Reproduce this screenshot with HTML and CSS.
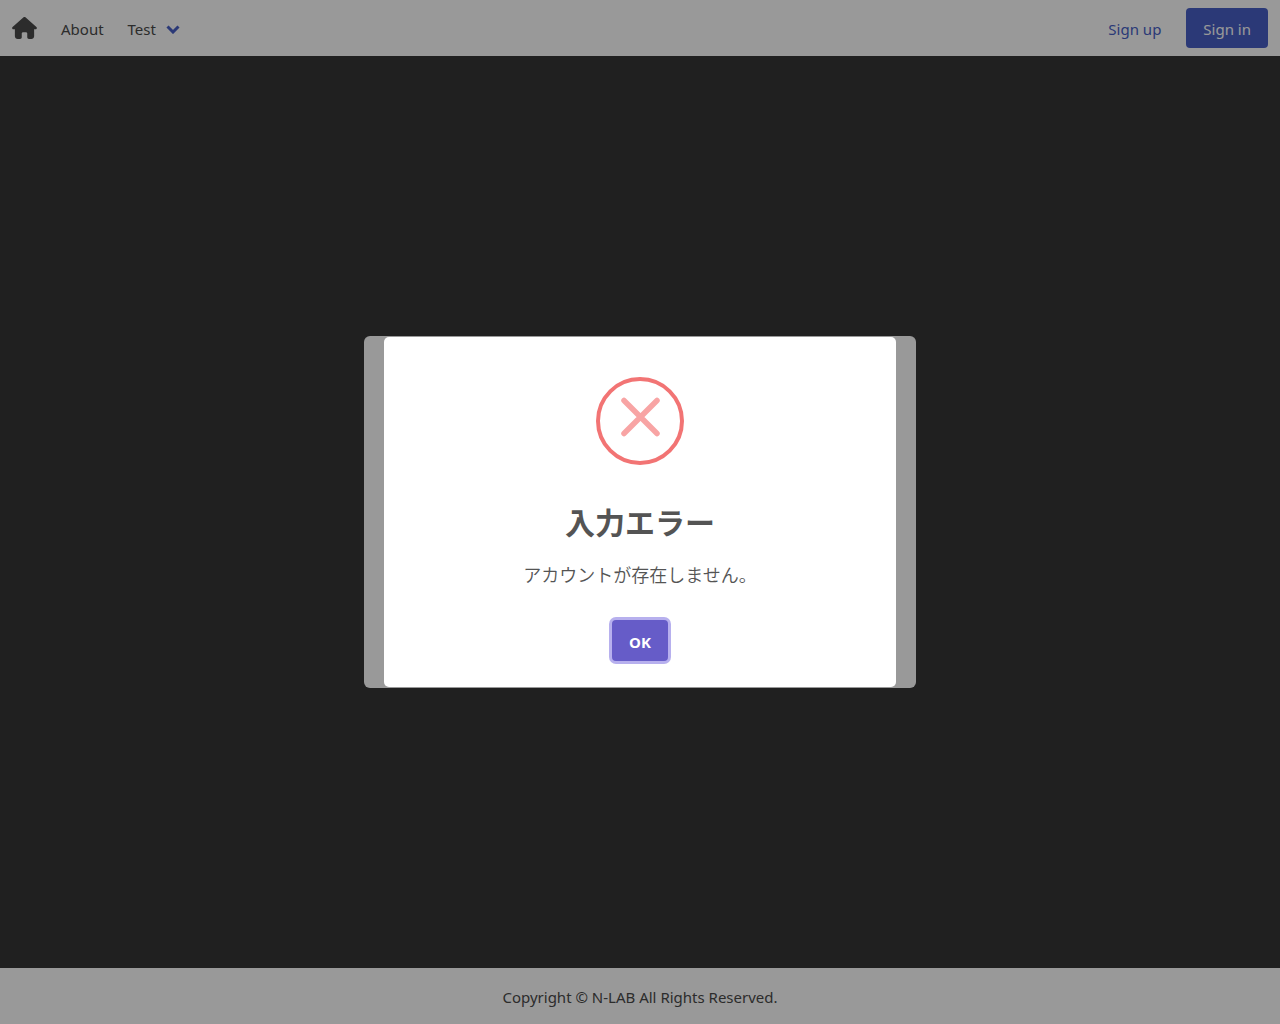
FILE: index.html
```html
<!DOCTYPE html>
<html lang="ja">
<head>
<meta charset="utf-8">
<meta name="viewport" content="width=device-width, initial-scale=1">
<title>N-LAB</title>
<link rel="stylesheet" href="styles.css">
</head>
<body>
<header>
  <nav class="navbar" aria-label="Main">
    <a class="nav-item home" href="#" aria-label="Home">
      <svg width="25" height="22" viewBox="0 0 576 512" aria-hidden="true"><path fill="currentColor" d="M575.800 255.500c0 18-15 32.100-32 32.100h-32l.7 160.200c0 35-29 64.200-64.500 64.200H392c-22 0-40-18-40-40v-88c0-17.700-14.300-32-32-32h-64c-17.700 0-32 14.300-32 32v88c0 22-18 40-40 40h-56c-35 0-64-29-64-64V287.600H32c-18 0-32-14-32-32.100 0-9 3-17 10-24L266.400 8c7-7 15-8 22-8s15 2 21 7l255.400 224.500c8 7 12 15 11 24z"/></svg>
    </a>
    <a class="nav-item" href="#">About</a>
    <a class="nav-item dropdown" href="#">Test
      <svg width="14" height="9" viewBox="0 0 14 9" aria-hidden="true"><path d="M1.500 1.500L7 7l5.500-5.500" fill="none" stroke="#485fc7" stroke-width="3"/></svg>
    </a>
    <div class="account">
      <a class="sign-up" href="#">Sign up</a>
      <a class="sign-in" href="#">Sign in</a>
    </div>
  </nav>
</header>
<main class="stage">
  <div class="form-box"></div>
</main>
<footer class="footer">Copyright © N-LAB All Rights Reserved.</footer>
<div class="overlay">
  <div class="dialog" role="alertdialog" aria-modal="true" aria-labelledby="title" aria-describedby="message">
    <svg class="error-icon" width="88" height="88" viewBox="0 0 88 88" aria-hidden="true">
      <circle cx="44" cy="44" r="42" fill="none" stroke="#f27474" stroke-width="4"/>
      <path d="M28 23.500l33 33M61 23.500l-33 33" fill="none" stroke="#f8a4a4" stroke-width="5.500" stroke-linecap="round"/>
    </svg>
    <h2 class="title" id="title">入力エラー</h2>
    <p class="message" id="message">アカウントが存在しません。</p>
    <button class="confirm" type="button">OK</button>
  </div>
</div>
</body>
</html>
```
FILE: styles.css
```css
* {
  box-sizing: border-box;
}

body {
  margin: 0;
  min-height: 100vh;
  display: flex;
  flex-direction: column;
  background: #363636;
  color: #4a4a4a;
  font: 15px/24px "Noto Sans", "Noto Sans CJK JP", sans-serif;
}

a {
  color: inherit;
  text-decoration: none;
}

.navbar {
  display: flex;
  min-height: 56px;
  padding-right: 12px;
  background: #fff;
}

.nav-item {
  display: flex;
  align-items: center;
  padding: 2px 12px 0;
}

.home {
  padding-top: 0;
}

.dropdown {
  gap: 10px;
}

.account {
  display: flex;
  align-items: center;
  gap: 8px;
  margin-left: auto;
}

.sign-up,
.sign-in {
  height: 40px;
  padding: 9px 17px 7px;
  border-radius: 4px;
  color: #485fc7;
}

.sign-in {
  background: #485fc7;
  color: #fff;
}

.stage {
  flex: 1;
  display: grid;
  place-items: center;
  padding: 20px;
}

.form-box {
  width: 100%;
  max-width: 552px;
  height: 352px;
  border-radius: 6px;
  background: #fff;
}

.footer {
  padding: 17px 12px 15px;
  background: #fff;
  text-align: center;
}

.overlay {
  position: fixed;
  inset: 0;
  display: grid;
  place-items: center;
  padding: 10px;
  background: rgba(0, 0, 0, 0.4);
}

.dialog {
  display: flex;
  flex-direction: column;
  align-items: center;
  width: 100%;
  max-width: 512px;
  padding: 40px 20px 26px;
  border-radius: 5px;
  background: #fff;
  color: #545454;
}

.title {
  margin: 34px 0 0;
  font: bold 30px/44px "Noto Sans CJK JP", sans-serif;
}

.message {
  margin: 17px 0 0;
  font: 350 18px/28px "Noto Sans CJK JP", sans-serif;
}

.confirm {
  margin-top: 32px;
  min-width: 56px;
  height: 41px;
  padding: 3px 16px 0;
  border: 0;
  border-radius: 4px;
  background: #665cc8;
  box-shadow: 0 0 0 3px #b7b0ee;
  color: #fff;
  font: bold 15px/24px "Noto Sans", sans-serif;
}
```
